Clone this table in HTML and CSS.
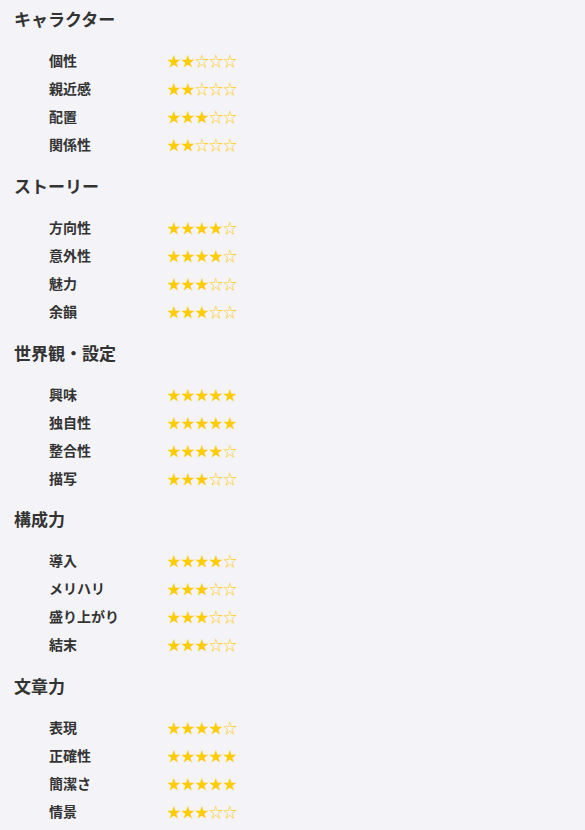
FILE: index.html
```html
<!DOCTYPE html>
<html lang="ja">
<head>
<meta charset="utf-8">
<link rel="stylesheet" href="styles.css">
</head>
<body>
<div class="page">
  <section class="group">
    <h2 class="title">キャラクター</h2>
    <ul class="rows">
      <li class="row"><span class="label">個性</span><span class="stars">★★☆☆☆</span></li>
      <li class="row"><span class="label">親近感</span><span class="stars">★★☆☆☆</span></li>
      <li class="row"><span class="label">配置</span><span class="stars">★★★☆☆</span></li>
      <li class="row"><span class="label">関係性</span><span class="stars">★★☆☆☆</span></li>
    </ul>
  </section>
  <section class="group">
    <h2 class="title">ストーリー</h2>
    <ul class="rows">
      <li class="row"><span class="label">方向性</span><span class="stars">★★★★☆</span></li>
      <li class="row"><span class="label">意外性</span><span class="stars">★★★★☆</span></li>
      <li class="row"><span class="label">魅力</span><span class="stars">★★★☆☆</span></li>
      <li class="row"><span class="label">余韻</span><span class="stars">★★★☆☆</span></li>
    </ul>
  </section>
  <section class="group">
    <h2 class="title">世界観・設定</h2>
    <ul class="rows">
      <li class="row"><span class="label">興味</span><span class="stars">★★★★★</span></li>
      <li class="row"><span class="label">独自性</span><span class="stars">★★★★★</span></li>
      <li class="row"><span class="label">整合性</span><span class="stars">★★★★☆</span></li>
      <li class="row"><span class="label">描写</span><span class="stars">★★★☆☆</span></li>
    </ul>
  </section>
  <section class="group">
    <h2 class="title">構成力</h2>
    <ul class="rows">
      <li class="row"><span class="label">導入</span><span class="stars">★★★★☆</span></li>
      <li class="row"><span class="label">メリハリ</span><span class="stars">★★★☆☆</span></li>
      <li class="row"><span class="label">盛り上がり</span><span class="stars">★★★☆☆</span></li>
      <li class="row"><span class="label">結末</span><span class="stars">★★★☆☆</span></li>
    </ul>
  </section>
  <section class="group">
    <h2 class="title">文章力</h2>
    <ul class="rows">
      <li class="row"><span class="label">表現</span><span class="stars">★★★★☆</span></li>
      <li class="row"><span class="label">正確性</span><span class="stars">★★★★★</span></li>
      <li class="row"><span class="label">簡潔さ</span><span class="stars">★★★★★</span></li>
      <li class="row"><span class="label">情景</span><span class="stars">★★★☆☆</span></li>
    </ul>
  </section>
</div>
</body>
</html>
```

FILE: styles.css
```css
html, body {
  margin: 0;
  padding: 0;
  background: #f4f3f8;
}
body {
  font-family: "Noto Sans CJK JP", "Noto Sans", sans-serif;
  color: #333333;
}
.page {
  padding: 6px 14px 0 14px;
}
.group {
  margin: 0;
}
.title {
  margin: 0;
  font-size: 17px;
  font-weight: bold;
  line-height: 26px;
  height: 26px;
}
.rows {
  list-style: none;
  margin: 0;
  padding: 14px 0 14.75px 35px;
}
.row {
  display: flex;
  align-items: center;
  height: 28px;
}
.label {
  width: 118px;
  font-size: 14px;
  font-weight: bold;
  line-height: 28px;
}
.stars {
  color: #ffcc00;
  font-size: 14px;
  line-height: 28px;
}
```
